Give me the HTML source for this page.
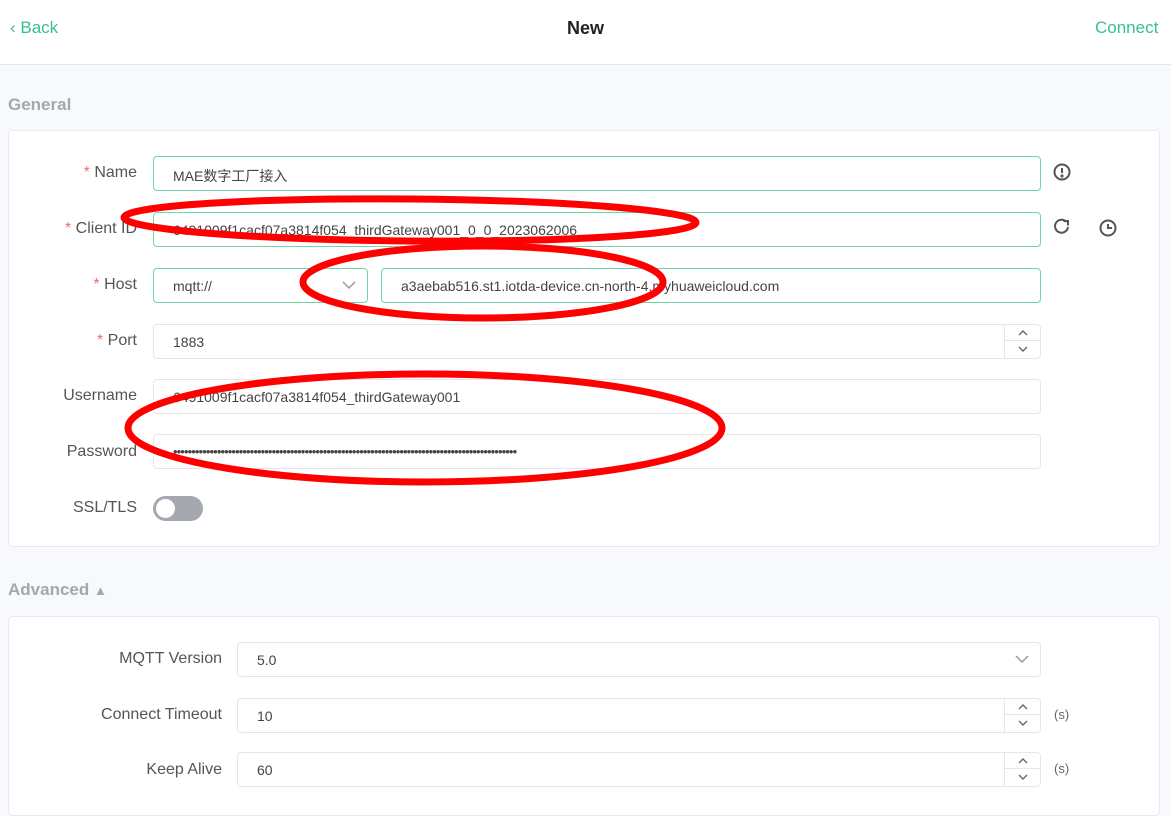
<!DOCTYPE html>
<html><head><meta charset="utf-8"><style>
*{box-sizing:border-box;margin:0;padding:0}
body{width:1171px;height:786px;overflow:hidden;background:#f8f9fc;font-family:"Liberation Sans","Noto Sans CJK SC",sans-serif;position:relative;color:#333}
.hdr{position:absolute;left:0;top:0;width:1171px;height:65px;background:#fff;border-bottom:1px solid #e6e8ee}
.abs{position:absolute}
.title{font-size:18px;font-weight:bold;color:#222;left:0;width:1171px;text-align:center;top:18px}
.green{color:#35c28c;font-size:17px}
.sec{font-size:17px;font-weight:bold;color:#a3a7ae}
.card{position:absolute;background:#fff;border:1px solid #e8eaef;border-radius:4px}
.lbl{position:absolute;font-size:16px;color:#555;text-align:right}
.lbl b{color:#f56c6c;font-weight:normal}
.in{position:absolute;height:35px;border:1px solid #e4e6ec;border-radius:4px;background:#fff;font-size:14px;color:#444;padding:9px 0 0 19px}
.act{border-color:#6fd5a8}
.spin{position:absolute;right:0;top:0;width:36px;height:33px;border-left:1px solid #e4e6ec}
.spin div{height:16px;border-bottom:1px solid #e4e6ec;position:relative}
.spin svg{position:absolute;left:12px;top:4px}
.dd{position:absolute;right:10px;top:10px}
.s{position:absolute;font-size:13px;color:#666}
</style></head><body>
<div class="hdr"></div>
<div class="abs green" style="left:10px;top:18px">&#8249; Back</div>
<div class="abs title">New</div>
<div class="abs green" style="left:1095px;top:18px">Connect</div>
<div class="abs sec" style="left:8px;top:95px">General</div>
<div class="card" style="left:8px;top:130px;width:1152px;height:417px"></div>
<div class="lbl" style="right:1034px;top:164px"><b>*</b> Name</div>
<div class="in act" style="left:153px;top:156px;width:888px">MAE数字工厂接入</div>
<div class="lbl" style="right:1034px;top:220px"><b>*</b> Client ID</div>
<div class="in act" style="left:153px;top:212px;width:888px">6491009f1cacf07a3814f054_thirdGateway001_0_0_2023062006</div>
<div class="lbl" style="right:1034px;top:276px"><b>*</b> Host</div>
<div class="in act" style="left:153px;top:268px;width:215px">mqtt://<svg class="dd" width="16" height="12" fill="none" stroke="#999" stroke-width="1.5"><path d="M2 3 L8 9 L14 3"/></svg></div>
<div class="in act" style="left:381px;top:268px;width:660px">a3aebab516.st1.iotda-device.cn-north-4.myhuaweicloud.com</div>
<div class="lbl" style="right:1034px;top:332px"><b>*</b> Port</div>
<div class="in" style="left:153px;top:324px;width:888px">1883<div class="spin"><div><svg width="12" height="8" fill="none" stroke="#666" stroke-width="1.4"><path d="M2 6 L6 2 L10 6"/></svg></div><div style="border:0"><svg width="12" height="8" fill="none" stroke="#666" stroke-width="1.4"><path d="M2 2 L6 6 L10 2"/></svg></div></div></div>
<div class="lbl" style="right:1034px;top:387px">Username</div>
<div class="in" style="left:153px;top:379px;width:888px">6491009f1cacf07a3814f054_thirdGateway001</div>
<div class="lbl" style="right:1034px;top:443px">Password</div>
<div class="in" style="left:153px;top:434px;width:888px;letter-spacing:-0.9px;font-size:13px">••••••••••••••••••••••••••••••••••••••••••••••••••••••••••••••••••••••••••••••••••••••••••••••</div>
<div class="lbl" style="right:1034px;top:499px">SSL/TLS</div>
<div class="abs" style="left:153px;top:496px;width:50px;height:25px;border-radius:13px;background:#a5a8ae"><div style="position:absolute;left:3px;top:3px;width:19px;height:19px;border-radius:50%;background:#fff"></div></div>
<svg class="abs" style="left:1050px;top:160px" width="70" height="80" fill="none" stroke="#555" stroke-width="2">
<circle cx="12" cy="12" r="7.5"/><line x1="12" y1="8" x2="12" y2="13"/><circle cx="12" cy="16" r=".6"/>
<path d="M18 67 A6.5 6.5 0 1 1 16.5 62"/><path d="M13.5 61 L18 61 L18 65.5"/>
<circle cx="58" cy="68" r="7.5"/><path d="M58 64 V68 H62"/>
</svg>
<div class="abs sec" style="left:8px;top:580px">Advanced <span style="font-size:13px">&#9650;</span></div>
<div class="card" style="left:8px;top:616px;width:1152px;height:200px"></div>
<div class="lbl" style="right:949px;top:650px">MQTT Version</div>
<div class="in" style="left:237px;top:642px;width:804px">5.0<svg class="dd" width="16" height="12" fill="none" stroke="#999" stroke-width="1.5"><path d="M2 3 L8 9 L14 3"/></svg></div>
<div class="lbl" style="right:949px;top:706px">Connect Timeout</div>
<div class="in" style="left:237px;top:698px;width:804px">10<div class="spin"><div><svg width="12" height="8" fill="none" stroke="#666" stroke-width="1.4"><path d="M2 6 L6 2 L10 6"/></svg></div><div style="border:0"><svg width="12" height="8" fill="none" stroke="#666" stroke-width="1.4"><path d="M2 2 L6 6 L10 2"/></svg></div></div></div>
<div class="s" style="left:1054px;top:707px">(s)</div>
<div class="lbl" style="right:949px;top:761px">Keep Alive</div>
<div class="in" style="left:237px;top:752px;width:804px">60<div class="spin"><div><svg width="12" height="8" fill="none" stroke="#666" stroke-width="1.4"><path d="M2 6 L6 2 L10 6"/></svg></div><div style="border:0"><svg width="12" height="8" fill="none" stroke="#666" stroke-width="1.4"><path d="M2 2 L6 6 L10 2"/></svg></div></div></div>
<div class="s" style="left:1054px;top:761px">(s)</div>
<svg class="abs" style="left:0;top:0" width="1171" height="786" fill="none" stroke="#f00" stroke-width="7">
<ellipse cx="410" cy="220" rx="286" ry="21" transform="rotate(0.5 410 220)"/>
<ellipse cx="483" cy="282" rx="180" ry="36"/>
<ellipse cx="425" cy="428" rx="297" ry="54"/>
</svg>
</body></html>
